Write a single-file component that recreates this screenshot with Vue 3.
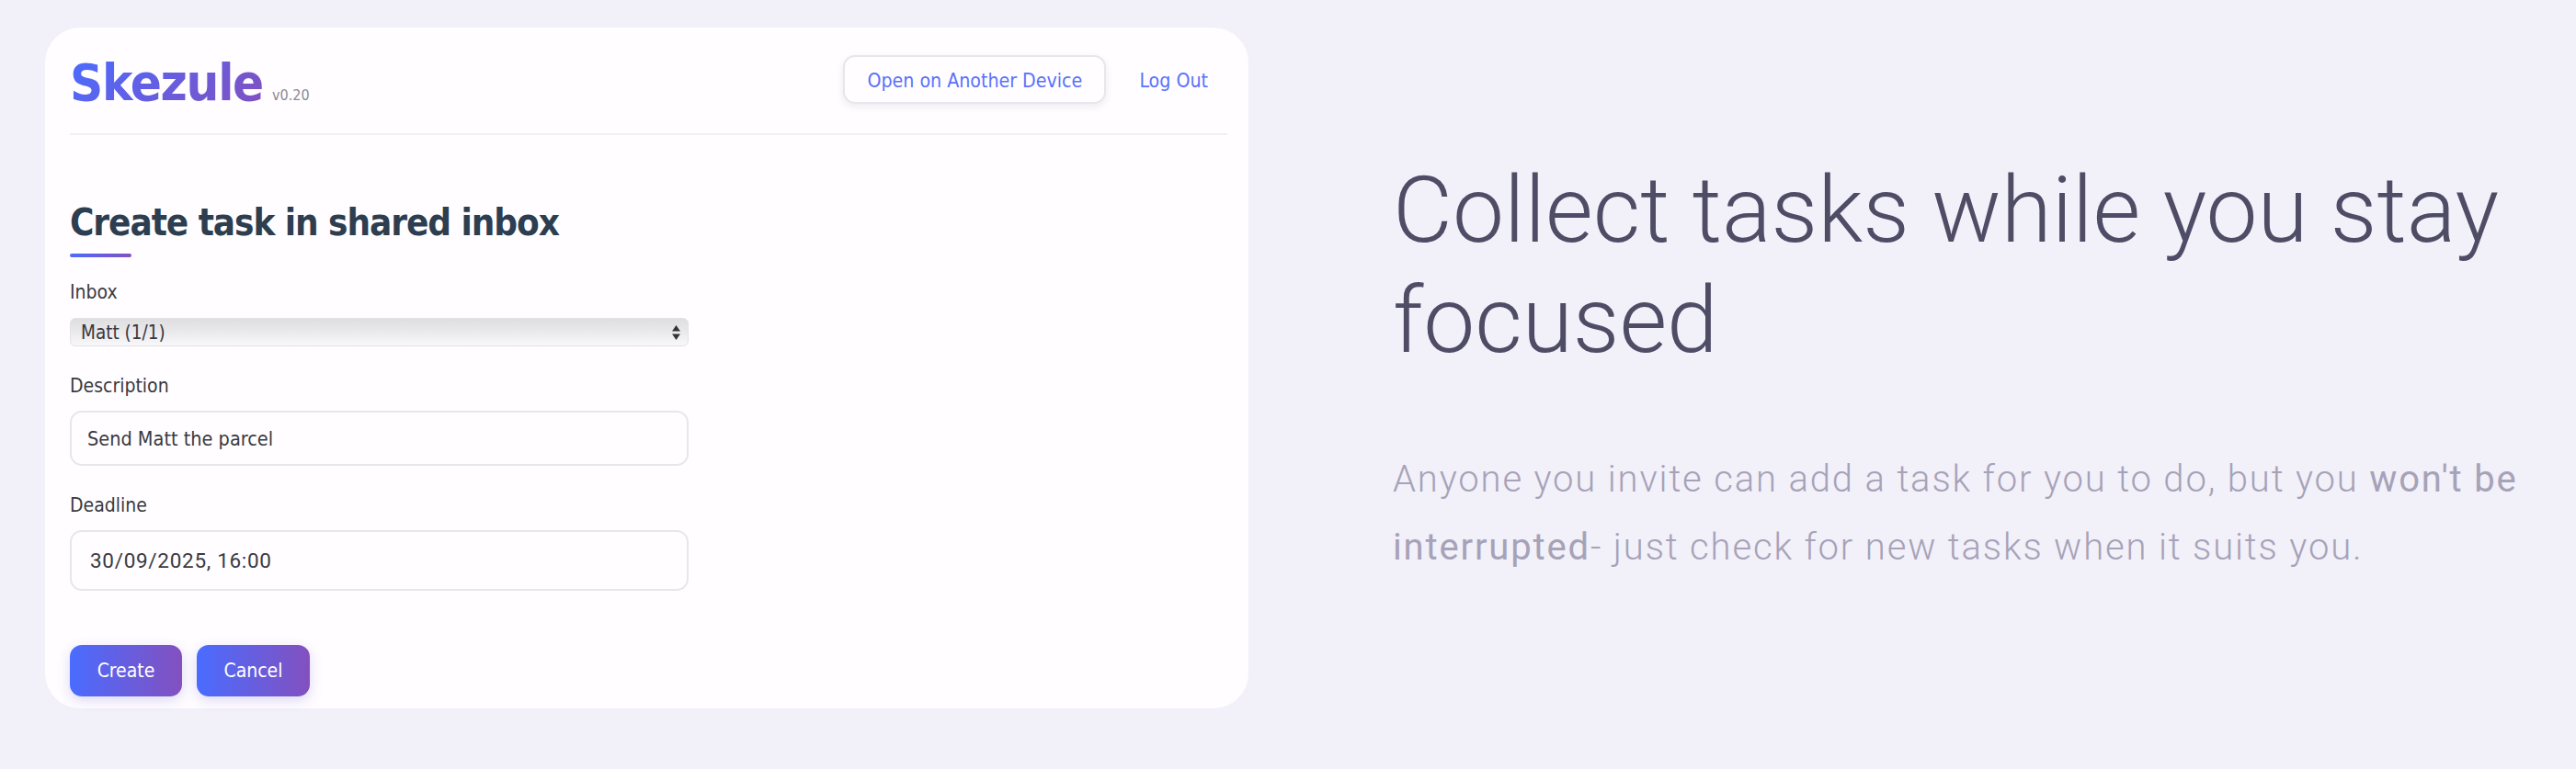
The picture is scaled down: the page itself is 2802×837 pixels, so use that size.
<template>
  <div class="page">
    <section class="card">
      <header class="top-bar">
        <div class="brand">
          <span class="logo">Skezule</span>
          <span class="version">v0.20</span>
        </div>
        <nav class="top-actions">
          <button class="outline-btn" type="button">Open on Another Device</button>
          <button class="link-btn" type="button">Log Out</button>
        </nav>
      </header>

      <form class="task-form" @submit.prevent>
        <h2 class="form-title">Create task in shared inbox</h2>
        <div class="title-rule"></div>

        <label class="field-label field-label-first" for="inbox">Inbox</label>
        <div class="select-wrap">
          <select id="inbox" v-model="inbox" class="inbox-select">
            <option>Matt (1/1)</option>
          </select>
          <svg class="select-arrows" width="11" height="18" viewBox="0 0 11 18">
            <path d="M5.5 1 L10 7.5 H1 Z" fill="#333" />
            <path d="M5.5 17 L10 10.5 H1 Z" fill="#333" />
          </svg>
        </div>

        <label class="field-label" for="description">Description</label>
        <input id="description" v-model="description" class="text-input desc-input" type="text" />

        <label class="field-label" for="deadline">Deadline</label>
        <input id="deadline" v-model="deadline" class="text-input deadline-input" type="text" />

        <div class="form-actions">
          <button class="primary-btn" type="submit">Create</button>
          <button class="primary-btn" type="button">Cancel</button>
        </div>
      </form>
    </section>

    <aside class="pitch">
      <h1 class="pitch-title">Collect tasks while you stay focused</h1>
      <p class="pitch-text">
        Anyone you invite can add a task for you to do, but you <strong>won't be interrupted</strong>- just check for new tasks when it suits you.
      </p>
    </aside>
  </div>
</template>

<script setup>
import { ref } from "vue";

const inbox = ref("Matt (1/1)");
const description = ref("Send Matt the parcel");
const deadline = ref("30/09/2025, 16:00");
</script>

<style>
html,
body {
  margin: 0;
  background: #f2f0f9;
}
</style>

<style scoped>
.page {
  display: flex;
  align-items: flex-start;
  height: 837px;
  box-sizing: border-box;
  padding: 30px 0 0 49px;
  background: #f2f0f9;
  font-family: "DejaVu Sans Condensed", "DejaVu Sans", sans-serif;
  overflow: hidden;
}

.card {
  width: 1309px;
  height: 741px;
  box-sizing: border-box;
  padding: 0 23px 0 27px;
  flex-shrink: 0;
  background: #fffdff;
  border-radius: 38px;
  font-stretch: condensed;
}

.top-bar {
  display: flex;
  justify-content: space-between;
  align-items: flex-start;
  height: 117px;
  box-sizing: border-box;
  border-bottom: 2px solid #f0eff2;
  padding-top: 30px;
}

.brand {
  display: flex;
  align-items: baseline;
  gap: 10px;
}

.logo {
  font-size: 56px;
  line-height: 60px;
  font-weight: 700;
  letter-spacing: -1.3px;
  background: linear-gradient(135deg, #4a6cff, #8250c0);
  -webkit-background-clip: text;
  background-clip: text;
  color: transparent;
}

.version {
  font-size: 16px;
  color: #8b8b92;
}

.top-actions {
  display: flex;
  align-items: center;
  gap: 15px;
  padding-right: 21px;
}

.outline-btn,
.link-btn {
  font: inherit;
  font-size: 21.2px;
  color: #5a72fb;
  cursor: pointer;
}

.outline-btn {
  width: 286px;
  height: 53px;
  padding: 2px 0 0;
  background: #fffdff;
  border: 2px solid #e8e6ec;
  border-radius: 13px;
  box-shadow: 0 3px 8px rgba(40, 30, 80, 0.08);
}

.link-btn {
  padding: 2px 0 0 21px;
  background: none;
  border: none;
}

.task-form {
  display: flex;
  flex-direction: column;
  width: 673px;
}

.form-title {
  margin: 70px 0 0;
  font-size: 40px;
  line-height: 50px;
  font-weight: 700;
  letter-spacing: -1.05px;
  color: #2c3e50;
}

.title-rule {
  width: 67px;
  height: 4px;
  margin-top: 9px;
  border-radius: 2px;
  background: linear-gradient(90deg, #4a6cff, #8250c0);
}

.field-label {
  margin-top: 30px;
  font-size: 21px;
  line-height: 26px;
  color: #3a3a40;
}

.field-label-first {
  margin-top: 25px;
}

.select-wrap {
  position: relative;
  margin-top: 15px;
}

.inbox-select {
  display: block;
  width: 100%;
  height: 31px;
  box-sizing: border-box;
  padding: 0 30px 0 11px;
  font: inherit;
  font-size: 20.5px;
  color: #38383e;
  appearance: none;
  border: 1px solid #e2e1e5;
  border-radius: 6px;
  background: linear-gradient(180deg, #dfdee1 0%, #e6e5e8 35%, #f8f7f9 100%);
}

.select-arrows {
  position: absolute;
  top: 7px;
  right: 8px;
  pointer-events: none;
}

.text-input {
  box-sizing: border-box;
  width: 100%;
  margin-top: 14px;
  font: inherit;
  font-size: 21.5px;
  color: #3a3a40;
  background: #fffdff;
  border: 2px solid #e8e6ec;
  border-radius: 13px;
  outline: none;
}

.desc-input {
  height: 60px;
  padding: 0 17px;
}

.deadline-input {
  height: 66px;
  padding: 0 20px;
  font-family: Roboto, sans-serif;
  font-stretch: normal;
  font-size: 22.5px;
  letter-spacing: 0.7px;
}

.form-actions {
  display: flex;
  gap: 16px;
  margin-top: 59px;
}

.primary-btn {
  width: 122px;
  height: 56px;
  padding: 0;
  font: inherit;
  font-size: 21px;
  color: #fff;
  border: none;
  border-radius: 13px;
  background: linear-gradient(90deg, #4a6cff, #8350bf);
  box-shadow: 0 4px 14px rgba(90, 80, 200, 0.22);
  cursor: pointer;
}

.primary-btn + .primary-btn {
  width: 123px;
}

.pitch {
  flex: 1;
  padding: 139px 40px 0 157px;
  font-family: Roboto, sans-serif;
}

.pitch-title {
  margin: 0;
  font-size: 100px;
  line-height: 120px;
  font-weight: 300;
  color: #4f4c66;
}

.pitch-text {
  margin: 76px 0 0;
  font-size: 40px;
  line-height: 74px;
  font-weight: 300;
  letter-spacing: 1.85px;
  color: #a6a2b8;
}

.pitch-text strong {
  font-weight: 400;
}
</style>
